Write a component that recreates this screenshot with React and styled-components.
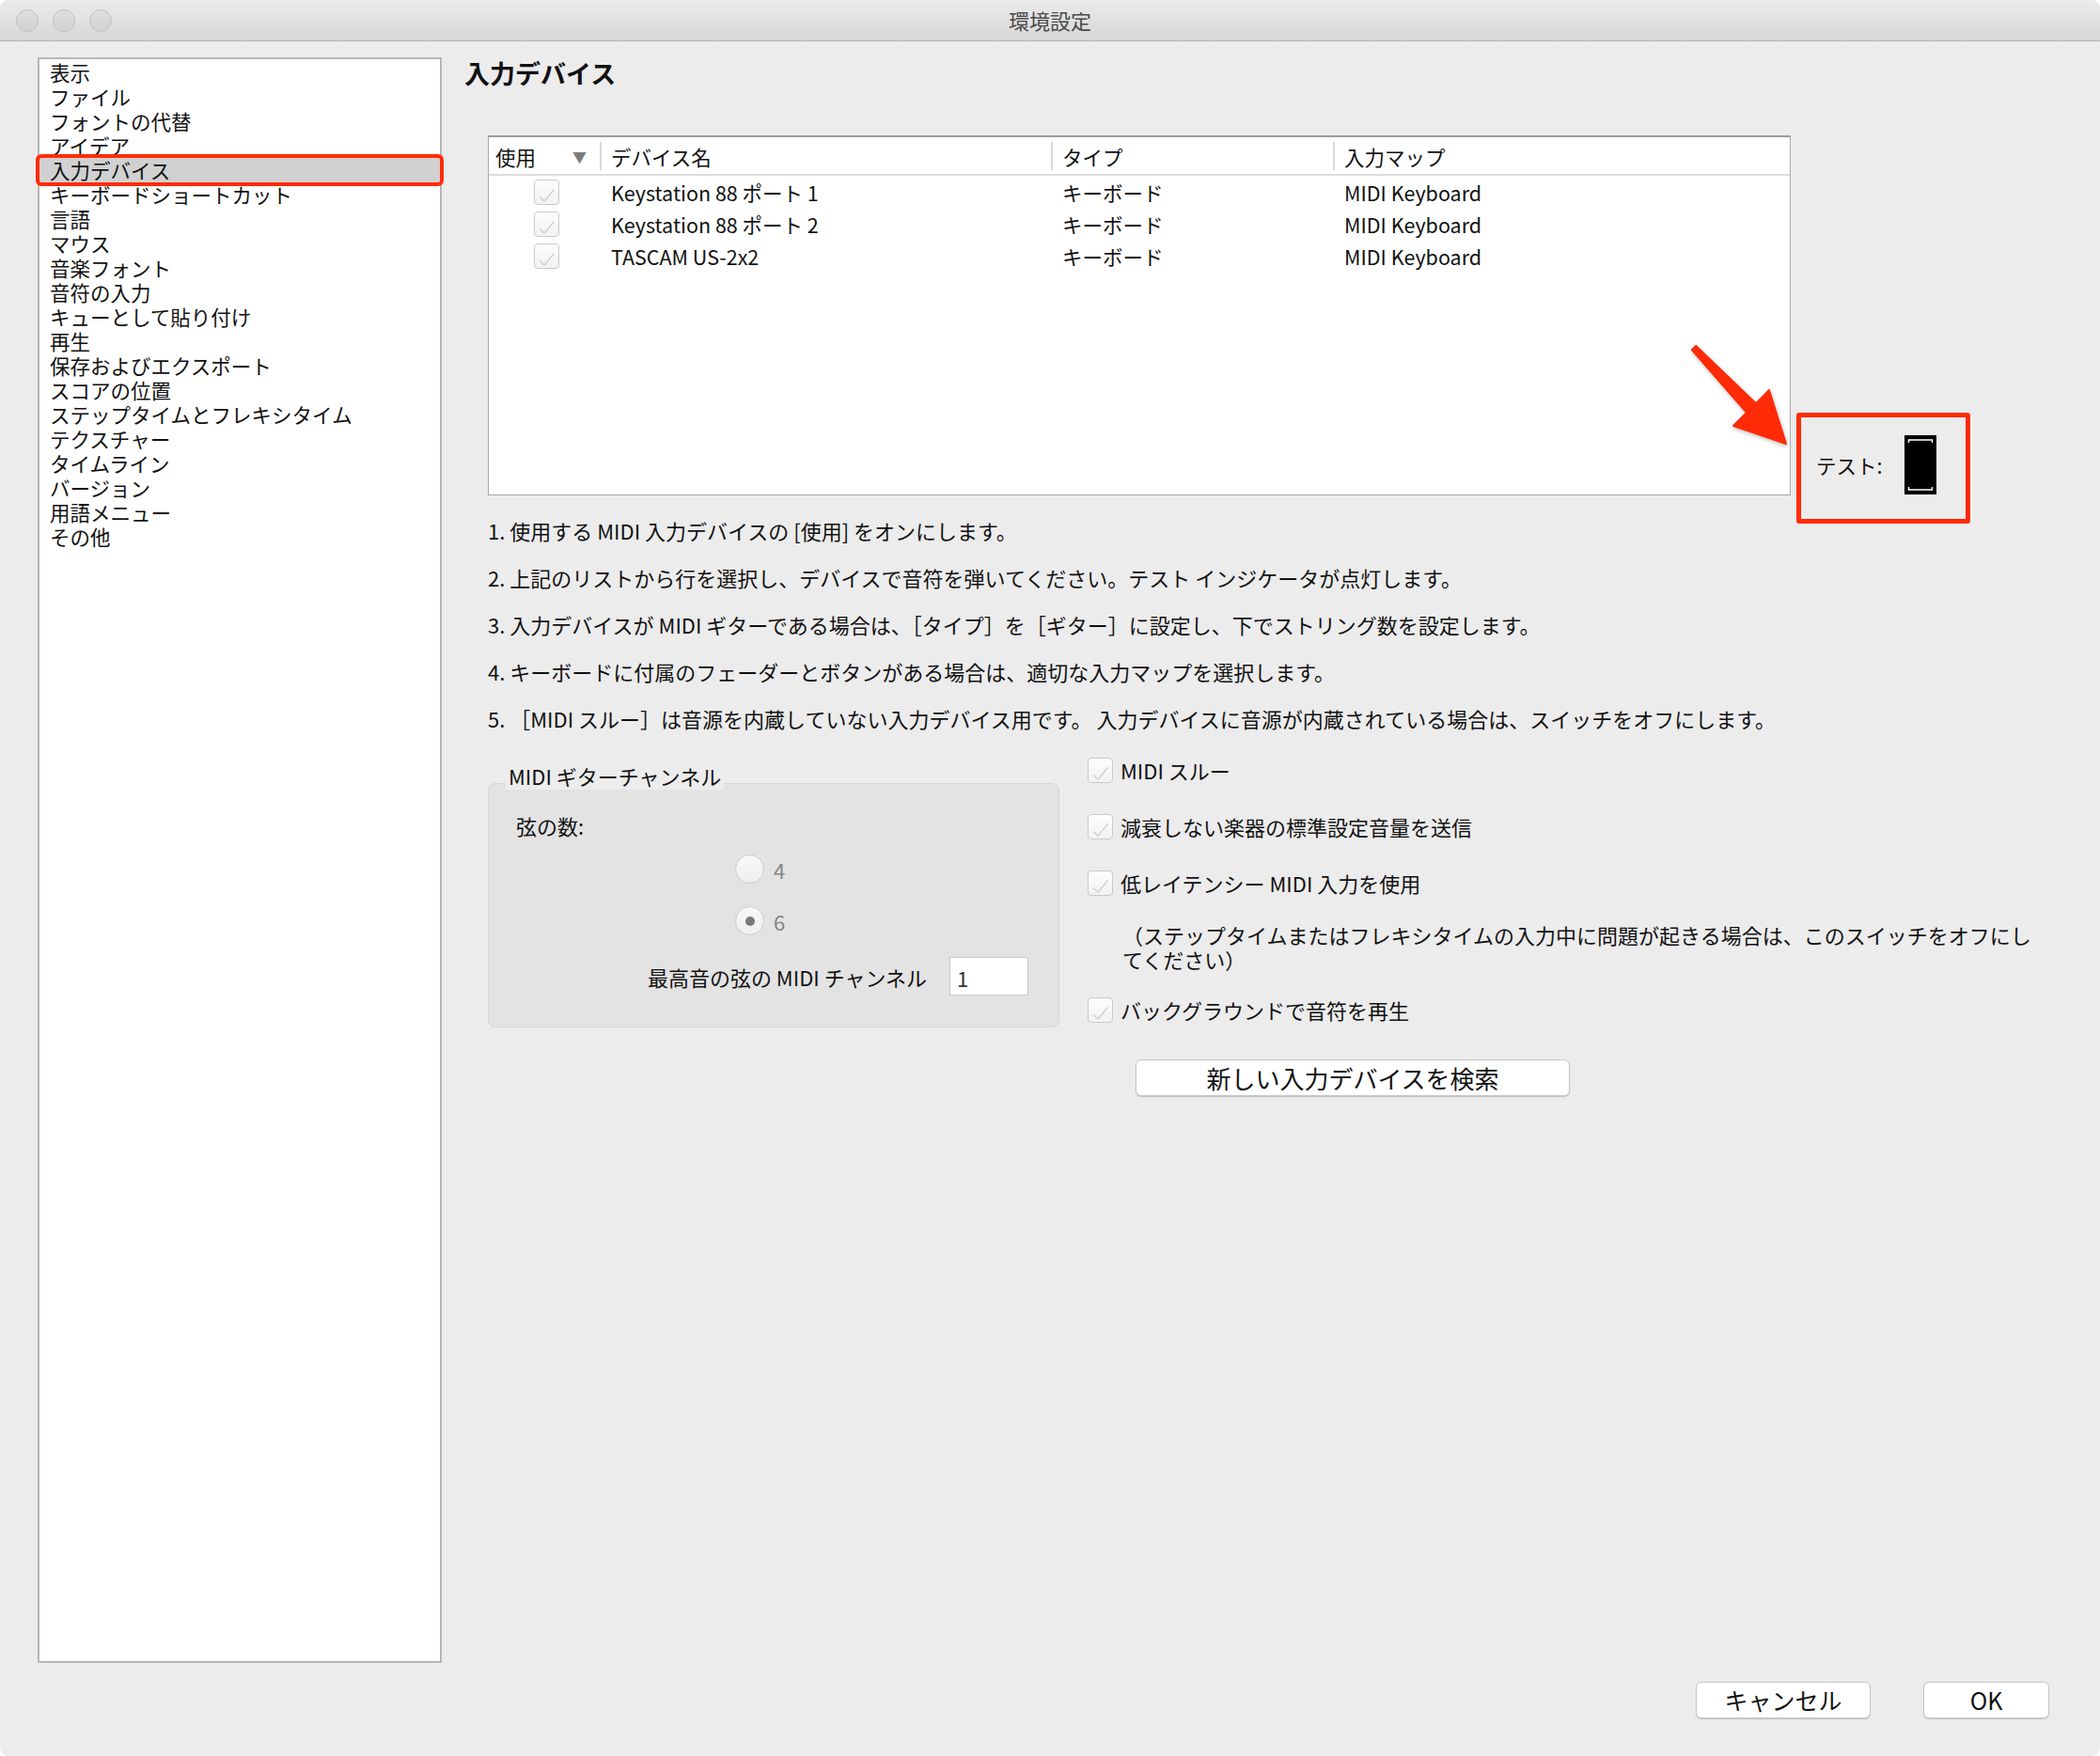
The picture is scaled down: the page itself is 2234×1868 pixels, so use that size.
import React from "react";
import styled, { createGlobalStyle } from "styled-components";

const GlobalStyle = createGlobalStyle`
  html, body {
    margin: 0;
    padding: 0;
    background: #ffffff;
  }
  body {
    font-family: "Noto Sans CJK JP", "Noto Sans", sans-serif;
    color: #111;
  }
  * {
    box-sizing: border-box;
  }
`;

const Window = styled.div`
  width: 2234px;
  height: 1868px;
  background: #ececec;
  border-radius: 9px;
  overflow: hidden;
  display: flex;
  flex-direction: column;
`;

const TitleBar = styled.div`
  height: 44px;
  flex-shrink: 0;
  display: grid;
  grid-template-columns: 1fr auto 1fr;
  align-items: center;
  background: linear-gradient(#ebebeb, #d7d7d7);
  border-bottom: 1px solid #b4b4b4;
`;

const Lights = styled.div`
  display: flex;
  gap: 15px;
  padding-left: 17px;
`;

const Light = styled.span`
  width: 24px;
  height: 24px;
  border-radius: 50%;
  background: linear-gradient(#dedede, #d2d2d2);
  border: 1px solid #c0c0c0;
`;

const WindowTitle = styled.div`
  font-size: 22px;
  color: #4a4a4a;
  line-height: 40px;
  padding-bottom: 2px;
`;

const Body = styled.div`
  display: flex;
  height: 1725px;
  flex-shrink: 0;
  padding: 17px 0 0 40px;
`;

const Sidebar = styled.ul`
  width: 430px;
  height: 1708px;
  margin: 0;
  padding: 1px 0;
  list-style: none;
  background: #fff;
  border: 2px solid #b6b6b6;
  flex-shrink: 0;
`;

const SideItem = styled.li`
  height: 26px;
  line-height: 26px;
  padding-left: 11px;
  font-size: 21.5px;
  white-space: nowrap;
  background: ${({ $selected }) => ($selected ? "#d1d1d1" : "transparent")};
  outline: ${({ $selected }) => ($selected ? "4px solid #ff2b06" : "none")};
  outline-offset: 0;
  border-radius: 2px;
`;

const Main = styled.div`
  flex: 1;
  padding-left: 24px;
  display: flex;
  flex-direction: column;
`;

const Heading = styled.h1`
  margin: 0 0 49px;
  font-size: 27px;
  line-height: 34px;
  font-weight: 700;
`;

const Content = styled.div`
  margin-left: 25px;
  display: flex;
  flex-direction: column;
`;

const DeviceRow = styled.div`
  display: flex;
  align-items: flex-end;
  gap: 6px;
  position: relative;
`;

const Table = styled.div`
  width: 1386px;
  height: 383px;
  background: #fff;
  border: 1px solid #a8a8a8;
  border-top: 2px solid #9c9c9c;
`;

const cols = "118px 480px 300px 1fr";

const HeaderRow = styled.div`
  display: grid;
  grid-template-columns: ${cols};
  height: 41px;
  border-bottom: 2px solid #dcdcdc;
  font-size: 21.5px;
`;

const HeaderCell = styled.div`
  display: flex;
  align-items: center;
  justify-content: space-between;
  padding: ${({ $first }) => ($first ? "2px 14px 0 7px" : "2px 12px 0")};
  background: ${({ $first }) =>
    $first ? "none" : "linear-gradient(#d8d8d8, #d8d8d8) left center / 2px 30px no-repeat"};
`;

const SortMark = styled.span`
  color: #7c7c7c;
  font-size: 15px;
`;

const DeviceLine = styled.div`
  display: grid;
  grid-template-columns: ${cols};
  height: 34px;
  align-items: center;
  font-size: 21.5px;
`;

const Cell = styled.div`
  display: flex;
  align-items: center;
  padding-left: ${({ $pad }) => $pad ?? 12}px;
  white-space: nowrap;
`;

const Box = styled.span`
  display: inline-flex;
  width: 27px;
  height: 27px;
  border-radius: 4px;
  border: 1.5px solid #c9c9c9;
  background: linear-gradient(#fdfdfd, #f2f2f2);
  flex-shrink: 0;
`;

const TestPanel = styled.div`
  width: 185px;
  height: 118px;
  margin-bottom: -30px;
  border: 5px solid #ff2b06;
  border-radius: 3px;
  display: flex;
  align-items: center;
  padding: 0 31px 7px 16px;
  font-size: 21.5px;
  flex-shrink: 0;
`;

const TestLabel = styled.span`
  flex: 1;
`;

const ArrowMark = styled.svg`
  position: absolute;
  left: 1271px;
  top: 211px;
  filter: drop-shadow(1px 2px 2px rgba(0, 0, 0, 0.25));
`;

const Steps = styled.div`
  margin-top: 22px;
  display: flex;
  flex-direction: column;
  gap: 20px;
  font-size: 22px;
  line-height: 30px;
`;

const Lower = styled.div`
  display: flex;
  align-items: flex-start;
  margin-top: 25px;
`;

const GuitarGroup = styled.div`
  width: 608px;
  margin-top: 6px;
  display: flex;
  flex-direction: column;
  flex-shrink: 0;
`;

const GroupTitle = styled.div`
  align-self: flex-start;
  margin-left: 19px;
  margin-bottom: -7px;
  padding: 0 3px;
  background: #ececec;
  font-size: 22px;
  line-height: 30px;
  position: relative;
  z-index: 1;
`;

const GroupBox = styled.div`
  height: 260px;
  background: #e3e3e3;
  border: 1px solid #d5d5d5;
  border-radius: 8px;
  padding: 29px 32px 0 29px;
  display: flex;
  flex-direction: column;
  font-size: 22px;
`;

const FieldLabel = styled.div`
  line-height: 30px;
`;

const RadioList = styled.div`
  margin: 16px 0 0 233px;
  display: flex;
  flex-direction: column;
  gap: 24px;
`;

const RadioRow = styled.div`
  display: flex;
  align-items: center;
  gap: 10px;
  height: 31px;
  color: #858585;
  font-size: 22px;
`;

const RadioDot = styled.span`
  width: 31px;
  height: 31px;
  border-radius: 50%;
  border: 1.5px solid #cdcdcd;
  background: linear-gradient(#f8f8f8, #eeeeee);
  display: flex;
  align-items: center;
  justify-content: center;
  &::after {
    content: "";
    width: 10px;
    height: 10px;
    border-radius: 50%;
    background: ${({ $on }) => ($on ? "#7a7a7a" : "transparent")};
  }
`;

const ChannelRow = styled.div`
  margin-top: 23px;
  display: flex;
  justify-content: flex-end;
  align-items: center;
  gap: 24px;
`;

const ChannelInput = styled.div`
  width: 84px;
  height: 41px;
  background: #fff;
  border: 1px solid #c9c9c9;
  padding: 6px 0 0 7px;
  font-size: 22px;
  line-height: 30px;
  color: #333;
`;

const Options = styled.div`
  margin-left: 30px;
  display: flex;
  flex-direction: column;
  font-size: 22px;
`;

const CheckRow = styled.div`
  display: flex;
  align-items: center;
  gap: 8px;
  height: 30px;
  margin-top: ${({ $top }) => $top || 0}px;
  white-space: nowrap;
`;

const Note = styled.div`
  margin-top: 27px;
  padding-left: 37px;
  line-height: 26px;
`;

const PushButton = styled.button`
  width: ${({ $w }) => $w}px;
  height: 39px;
  margin: ${({ $m }) => $m || 0};
  background: #fff;
  border: 1px solid #c6c6c6;
  border-radius: 6px;
  box-shadow: 0 1px 1px rgba(0, 0, 0, 0.18);
  font-family: inherit;
  font-size: ${({ $fs }) => $fs || 24}px;
  color: #111;
  padding: 0;
  line-height: 37px;
`;

const Footer = styled.div`
  flex: 1;
  display: flex;
  justify-content: flex-end;
  align-items: flex-start;
  gap: 56px;
  padding: 20px 54px 0 0;
`;

const sections = [
  "表示",
  "ファイル",
  "フォントの代替",
  "アイデア",
  "入力デバイス",
  "キーボードショートカット",
  "言語",
  "マウス",
  "音楽フォント",
  "音符の入力",
  "キューとして貼り付け",
  "再生",
  "保存およびエクスポート",
  "スコアの位置",
  "ステップタイムとフレキシタイム",
  "テクスチャー",
  "タイムライン",
  "バージョン",
  "用語メニュー",
  "その他",
];

const devices = [
  { name: "Keystation 88 ポート 1", type: "キーボード", map: "MIDI Keyboard" },
  { name: "Keystation 88 ポート 2", type: "キーボード", map: "MIDI Keyboard" },
  { name: "TASCAM US-2x2", type: "キーボード", map: "MIDI Keyboard" },
];

const steps = [
  "1. 使用する MIDI 入力デバイスの [使用] をオンにします。",
  "2. 上記のリストから行を選択し、デバイスで音符を弾いてください。テスト インジケータが点灯します。",
  "3. 入力デバイスが MIDI ギターである場合は、［タイプ］を［ギター］に設定し、下でストリング数を設定します。",
  "4. キーボードに付属のフェーダーとボタンがある場合は、適切な入力マップを選択します。",
  "5. ［MIDI スルー］は音源を内蔵していない入力デバイス用です。 入力デバイスに音源が内蔵されている場合は、スイッチをオフにします。",
];

// disabled, ticked checkbox as drawn by the system
function Check() {
  return (
    <Box>
      <svg width="24" height="24" viewBox="0 0 24 24">
        <path d="M5 17.5 L10.2 22 L20.5 9.5" fill="none" stroke="#d0d0d0" strokeWidth="1.4" />
      </svg>
    </Box>
  );
}

function Indicator() {
  return (
    <svg width="34" height="63" viewBox="0 0 34 63">
      <rect width="34" height="63" fill="#000" />
      <path d="M4.5 8 V5 H29.5 V8" fill="none" stroke="#fff" strokeWidth="1.5" />
      <path d="M4.5 55 V58 H29.5 V55" fill="none" stroke="#fff" strokeWidth="1.5" />
    </svg>
  );
}

function Arrow() {
  return (
    <ArrowMark width="125" height="125" viewBox="0 0 125 125">
      <polygon
        points="14.2,12.9 78,74.1 92,60 110,117 54,98 68,83.9 9.8,17.1"
        fill="#ff2b06"
        stroke="#ff2b06"
        strokeWidth="2"
        strokeLinejoin="round"
      />
    </ArrowMark>
  );
}

export default function App() {
  return (
    <>
      <GlobalStyle />
      <Window>
        <TitleBar>
          <Lights>
            <Light />
            <Light />
            <Light />
          </Lights>
          <WindowTitle>環境設定</WindowTitle>
          <div />
        </TitleBar>

        <Body>
          <Sidebar>
            {sections.map((s) => (
              <SideItem key={s} $selected={s === "入力デバイス"}>
                {s}
              </SideItem>
            ))}
          </Sidebar>

          <Main>
            <Heading>入力デバイス</Heading>
            <Content>
              <DeviceRow>
                <Table>
                  <HeaderRow>
                    <HeaderCell $first>
                      使用<SortMark>▼</SortMark>
                    </HeaderCell>
                    <HeaderCell>デバイス名</HeaderCell>
                    <HeaderCell>タイプ</HeaderCell>
                    <HeaderCell>入力マップ</HeaderCell>
                  </HeaderRow>
                  {devices.map((d) => (
                    <DeviceLine key={d.name}>
                      <Cell $pad={48}>
                        <Check />
                      </Cell>
                      <Cell>{d.name}</Cell>
                      <Cell>{d.type}</Cell>
                      <Cell>{d.map}</Cell>
                    </DeviceLine>
                  ))}
                </Table>
                <TestPanel>
                  <TestLabel>テスト:</TestLabel>
                  <Indicator />
                </TestPanel>
                <Arrow />
              </DeviceRow>

              <Steps>
                {steps.map((s) => (
                  <div key={s}>{s}</div>
                ))}
              </Steps>

              <Lower>
                <GuitarGroup>
                  <GroupTitle>MIDI ギターチャンネル</GroupTitle>
                  <GroupBox>
                    <FieldLabel>弦の数:</FieldLabel>
                    <RadioList>
                      <RadioRow>
                        <RadioDot />4
                      </RadioRow>
                      <RadioRow>
                        <RadioDot $on />6
                      </RadioRow>
                    </RadioList>
                    <ChannelRow>
                      <span>最高音の弦の MIDI チャンネル</span>
                      <ChannelInput>1</ChannelInput>
                    </ChannelRow>
                  </GroupBox>
                </GuitarGroup>

                <Options>
                  <CheckRow>
                    <Check />
                    MIDI スルー
                  </CheckRow>
                  <CheckRow $top={30}>
                    <Check />
                    減衰しない楽器の標準設定音量を送信
                  </CheckRow>
                  <CheckRow $top={30}>
                    <Check />
                    低レイテンシー MIDI 入力を使用
                  </CheckRow>
                  <Note>
                    （ステップタイムまたはフレキシタイムの入力中に問題が起きる場合は、このスイッチをオフにし
                    <br />
                    てください）
                  </Note>
                  <CheckRow $top={26}>
                    <Check />
                    バックグラウンドで音符を再生
                  </CheckRow>
                  <PushButton $w={462} $fs={26} $m="38px 0 0 51px">
                    新しい入力デバイスを検索
                  </PushButton>
                </Options>
              </Lower>
            </Content>
          </Main>
        </Body>

        <Footer>
          <PushButton $w={186} $fs={25}>
            キャンセル
          </PushButton>
          <PushButton $w={134} $fs={25}>
            OK
          </PushButton>
        </Footer>
      </Window>
    </>
  );
}
